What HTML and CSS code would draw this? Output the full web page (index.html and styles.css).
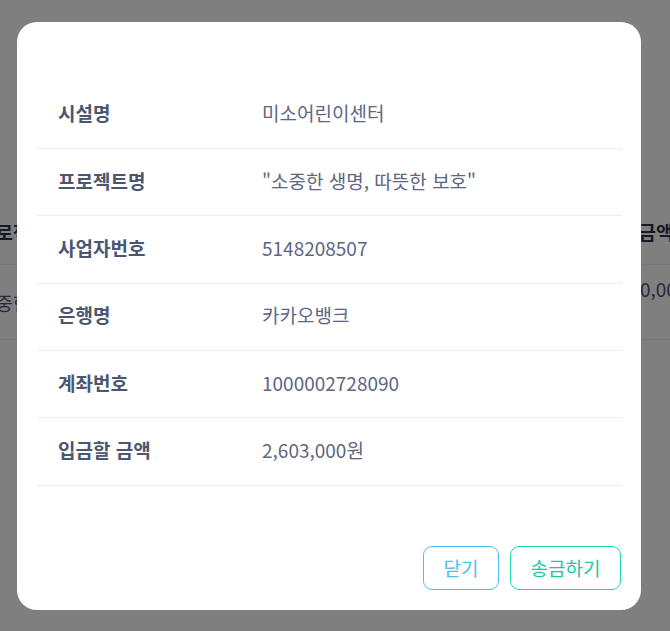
FILE: index.html
```html
<!DOCTYPE html>
<html lang="ko">
<head>
<meta charset="utf-8">
<link rel="stylesheet" href="styles.css">
</head>
<body>
<div class="page">
  <div class="table">
    <div class="trow thead">
      <div class="tcell c1">프로젝트명</div>
      <div class="tcell c2">입금액</div>
    </div>
    <div class="trow">
      <div class="tcell c1">소중한 생명</div>
      <div class="tcell c2 shift">2,600,000원</div>
    </div>
  </div>
</div>
<div class="overlay"></div>
<div class="modal">
  <div class="rows">
    <div class="row"><div class="label">시설명</div><div class="value">미소어린이센터</div></div>
    <div class="row"><div class="label">프로젝트명</div><div class="value">"소중한 생명, 따뜻한 보호"</div></div>
    <div class="row"><div class="label">사업자번호</div><div class="value">5148208507</div></div>
    <div class="row"><div class="label">은행명</div><div class="value">카카오뱅크</div></div>
    <div class="row"><div class="label">계좌번호</div><div class="value">1000002728090</div></div>
    <div class="row"><div class="label">입금할 금액</div><div class="value">2,603,000원</div></div>
  </div>
  <div class="actions">
    <button class="btn btn-close">닫기</button>
    <button class="btn btn-send">송금하기</button>
  </div>
</div>
</body>
</html>
```
FILE: styles.css
```css
* { box-sizing: border-box; }
html, body {
  margin: 0;
  padding: 0;
  width: 670px;
  height: 631px;
  overflow: hidden;
  background: #ffffff;
  font-family: "Noto Sans CJK KR", "Noto Sans", sans-serif;
}
.page {
  padding-top: 198px;
  margin-left: -22px;
  width: 720px;
}
.table {
  display: flex;
  flex-direction: column;
}
.trow {
  display: flex;
  height: 75px;
  align-items: center;
  border-bottom: 1px solid #eaecf0;
  font-size: 19px;
  color: #4d5670;
}
.thead {
  height: 67px;
  font-weight: 700;
  color: #2c3550;
}
.tcell.c1 { width: 643px; }
.tcell.c2 { flex: 1; }
.tcell.shift { margin-left: -18px; }
.overlay {
  position: fixed;
  inset: 0;
  background: rgba(0, 0, 0, 0.5);
}
.modal {
  position: fixed;
  left: 17px;
  top: 22px;
  width: 624px;
  height: 588px;
  background: #ffffff;
  border-radius: 20px;
  padding: 59.5px 19px 20px 20px;
  display: flex;
  flex-direction: column;
}
.rows {
  display: flex;
  flex-direction: column;
}
.row {
  display: flex;
  align-items: center;
  height: 67.4px;
  padding-bottom: 4px;
  border-bottom: 1px solid #eceef4;
  font-size: 19px;
  line-height: 1;
}
.label {
  width: 225px;
  padding-left: 21px;
  font-weight: 700;
  color: #4b5671;
}
.value {
  color: #5d6782;
}
.actions {
  margin-top: auto;
  display: flex;
  justify-content: flex-end;
  gap: 11px;
  padding-right: 1px;
}
.btn {
  height: 44px;
  padding: 0 0 2px;
  background: #ffffff;
  border-radius: 9px;
  font-family: inherit;
  font-size: 19px;
  cursor: pointer;
}
.btn-close {
  border: 1px solid #4cbff5;
  color: #4cbff5;
  width: 76px;
}
.btn-send {
  border: 1px solid #19dcb4;
  color: #19c9a5;
  width: 111px;
}
```
